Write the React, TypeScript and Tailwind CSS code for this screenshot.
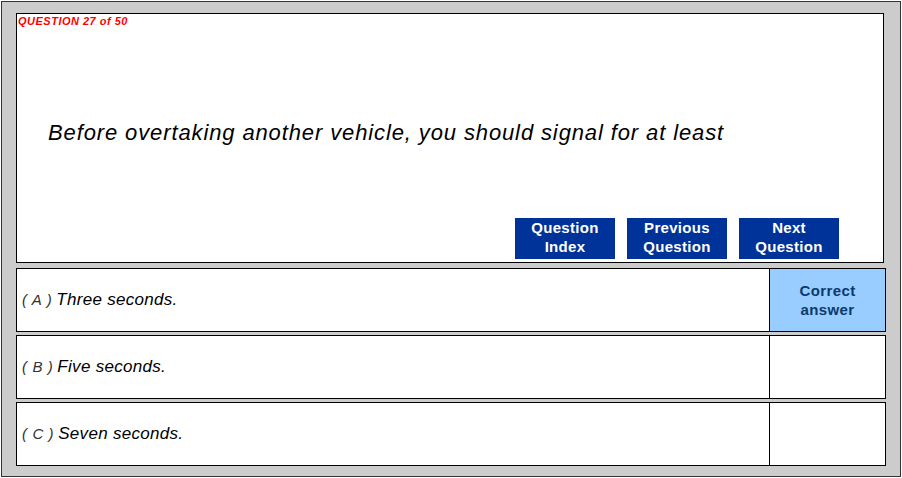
import React from "react";

const answers = [
  { letter: "A", text: "Three seconds.", correct: true },
  { letter: "B", text: "Five seconds.", correct: false },
  { letter: "C", text: "Seven seconds.", correct: false },
];

const buttons = [
  ["Question", "Index"],
  ["Previous", "Question"],
  ["Next", "Question"],
];

export default function App() {
  return (
    <div className="w-[902px] h-[478px] bg-white" style={{ fontFamily: '"Liberation Sans", Arial, sans-serif' }}>
      <div className="ml-[1px] mt-[1px] w-[900px] h-[476px] border border-[#333333] bg-[#cccccc] pt-[11px] pl-[14px]">
        <div className="w-[868px] h-[250px] border border-black bg-white flex flex-col">
          <div className="pl-[1px] pt-[1px] text-[11px] leading-[13px] font-bold italic tracking-[0.5px] text-[#ff0000]">
            QUESTION 27 of 50
          </div>
          <div className="pl-[31px] pt-[92px] text-[22px] leading-[26px] italic tracking-[0.88px] text-black">
            Before overtaking another vehicle, you should signal for at least
          </div>
          <div className="mt-auto mb-[3px] flex justify-end gap-[12px] pr-[44px]">
            {buttons.map((b) => (
              <div
                key={b.join(" ")}
                className="w-[100px] h-[41px] pb-[3px] bg-[#003399] text-white font-bold text-[15px] leading-[19px] tracking-[0.3px] flex flex-col items-center justify-center"
              >
                <span>{b[0]}</span>
                <span>{b[1]}</span>
              </div>
            ))}
          </div>
        </div>
        <div className="mt-[5px] flex flex-col gap-[3px] w-[870px]">
          {answers.map((a) => (
            <div key={a.letter} className="h-[64px] border border-black bg-white flex">
              <div className="flex-1 flex items-center pl-[5px] text-[17px] italic tracking-[0.3px] text-black">
                <span className="font-light text-[#333333] text-[15px] tracking-[0.6px]">( {a.letter} )</span>
                <span className="ml-[4px]">{a.text}</span>
              </div>
              <div
                className={
                  "w-[116px] border-l border-black flex flex-col items-center justify-center font-bold text-[15px] leading-[19px] tracking-[0.4px] text-[#0a3a6e] " +
                  (a.correct ? "bg-[#99ccff]" : "bg-white")
                }
              >
                {a.correct && (
                  <>
                    <span>Correct</span>
                    <span>answer</span>
                  </>
                )}
              </div>
            </div>
          ))}
        </div>
      </div>
    </div>
  );
}
